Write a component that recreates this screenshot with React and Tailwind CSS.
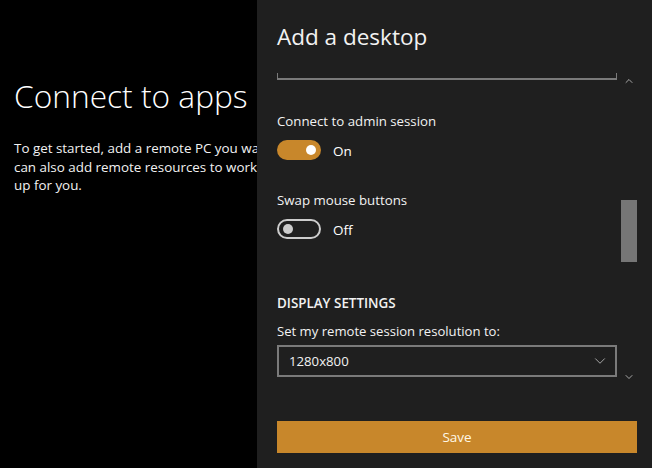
import { ChevronDown, ChevronUp } from 'lucide-react'

function Toggle({ on, label }) {
  return (
    <div className="flex items-center mt-[10px]">
      {on ? (
        <div className="w-[44px] h-[20px] rounded-full bg-[#c8872b] flex items-center justify-end pr-[5px]">
          <div className="w-[10px] h-[10px] rounded-full bg-white" />
        </div>
      ) : (
        <div className="w-[44px] h-[20px] rounded-full border-2 border-[#cccccc] flex items-center pl-[4px]">
          <div className="w-[10px] h-[10px] rounded-full bg-[#cccccc]" />
        </div>
      )}
      <span className="ml-[12px] pt-[2px] text-[13.5px] leading-[18px] text-white">{label}</span>
    </div>
  )
}

export default function App() {
  return (
    <div className="w-[652px] h-[468px] flex overflow-hidden bg-black text-white font-['Open_Sans',sans-serif]">
      {/* left pane, text runs under the panel */}
      <div className="w-[257px] shrink-0 overflow-hidden pl-[14px] pt-[74px]">
        <h1 className="text-[31.7px] leading-[44px] font-light whitespace-nowrap">Connect to apps</h1>
        <div className="mt-[21px] text-[13.4px] leading-[18.5px] text-[#f2f2f2] whitespace-nowrap">
          <p>To get started, add a remote PC you want</p>
          <p>can also add remote resources to work with</p>
          <p>up for you.</p>
        </div>
      </div>

      {/* Add a desktop panel */}
      <div className="flex-1 bg-[#1f1f1f] pl-[20px] pr-[15px] flex flex-col">
        <h2 className="text-[22.5px] leading-[30px] mt-[22px] font-normal text-[#f2f2f2]">Add a desktop</h2>

        <div className="flex mt-[21px] h-[312px]">
          <div className="w-[340px]">
            <div className="h-[7px] border-x border-b-2 border-[#7a7a7a]" />
            <p className="mt-[32px] text-[13.25px] leading-[18px] text-[#f2f2f2]">Connect to admin session</p>
            <Toggle on label="On" />

            <p className="mt-[31px] text-[13.25px] leading-[18px] text-[#f2f2f2]">Swap mouse buttons</p>
            <Toggle label="Off" />

            <p className="mt-[55px] text-[13.4px] leading-[18px] font-semibold text-[#f2f2f2]">DISPLAY SETTINGS</p>
            <p className="mt-[10px] text-[13.1px] leading-[18px] text-[#f2f2f2]">Set my remote session resolution to:</p>
            <div className="mt-[5px] h-[32px] border-2 border-[#7a7a7a] flex items-center justify-between pl-[10px] pr-[6px]">
              <span className="pt-[1px] text-[13.2px] text-[#f2f2f2]">1280x800</span>
              <ChevronDown size={18} strokeWidth={1} className="text-[#d0d0d0]" />
            </div>
          </div>

          <div className="ml-[4px] w-[16px] flex flex-col items-center">
            <ChevronUp size={12} strokeWidth={1.4} className="mt-[2px] text-[#e0e0e0]" />
            <div className="mt-[113px] w-[16px] h-[62px] bg-[#767676]" />
            <ChevronDown size={12} strokeWidth={1.4} className="mt-[109px] text-[#e0e0e0]" />
          </div>
        </div>

        <button className="mt-[36px] h-[32px] bg-[#c8872b] text-[13.5px] font-medium text-[#fff8e8]">Save</button>
      </div>
    </div>
  )
}
